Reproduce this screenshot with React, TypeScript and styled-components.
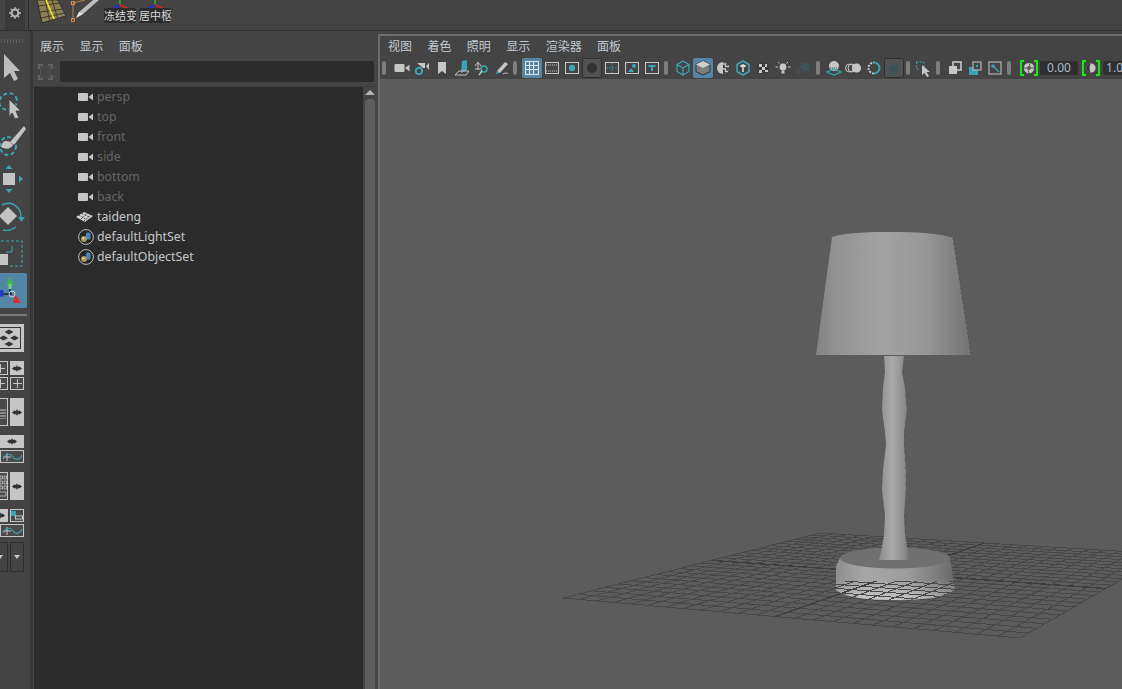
import React from "react";
import styled, { createGlobalStyle } from "styled-components";

const Global = createGlobalStyle`
  html, body { margin: 0; padding: 0; width: 1122px; height: 689px; overflow: hidden; background: #444444; }
  #root { width: 1122px; height: 689px; }
  * { box-sizing: border-box; }
`;
const FONT = `"Noto Sans CJK SC", "Noto Sans", sans-serif`;
const TEAL = "#3aa5b4";
const LIGHT = "#c6c6c6";

const Page = styled.div`
  width: 1122px; height: 689px; display: flex; flex-direction: column; background: #444444;
  font-family: ${FONT}; overflow: hidden;
`;
const Shelf = styled.div`
  height: 31px; flex: none; display: flex; background: #444444; border-bottom: 1px solid #2f2f2f;
`;
const GearBox = styled.div`
  width: 20px; height: 30px; margin-left: 5px; background: #3a3a3a; display: flex; align-items: center; justify-content: center; padding-bottom: 4px;
`;
const ShelfBody = styled.div`
  flex: 1; margin-left: 3px; border-left: 1px solid #2f2f2f; display: flex; align-items: flex-start; padding-left: 7px; overflow: hidden;
`;
const ShelfIcon = styled.svg<{ $ml?: number }>`
  display: block; flex: none; margin-left: ${(p) => p.$ml ?? 0}px;
`;
const TextTool = styled.div<{ $ml: number }>`
  position: relative; width: 33px; height: 30px; margin-left: ${(p) => p.$ml}px; flex: none; overflow: hidden;
`;
const TextToolAxes = styled.svg`
  display: block;
`;
const TextToolLabel = styled.span`
  position: absolute; left: 0; top: 8px; width: 32px; height: 15px; line-height: 15px; background: rgba(40,40,40,.85);
  border-radius: 2px; color: #d8d8d8; font-size: 11px; white-space: nowrap; overflow: hidden;
`;
const Main = styled.div`
  flex: 1; min-height: 0; display: flex;
`;
const ToolBox = styled.div`
  width: 31px; flex: none; border-right: 1px solid #333333; display: flex; flex-direction: column; overflow: hidden; padding-top: 8px;
`;
const DotHandle = styled.div`
  height: 4px; width: 25px; flex: none;
  background-image: radial-gradient(#7b7b7b 0.7px, transparent 0.8px); background-size: 3px 2px;
`;
const ToolSvg = styled.svg<{ $mt: number }>`
  display: block; flex: none; margin-top: ${(p) => p.$mt}px;
`;
const ActiveTool = styled.div`
  width: 27px; height: 35px; flex: none; margin-top: 6px; background: #5285a6; border-radius: 0 2px 2px 0;
`;
const ActiveGlyph = styled.svg`
  display: block;
`;
const ToolRule = styled.div`
  width: 27px; height: 2px; flex: none; margin-top: 6px; background: #7a7a7a;
`;
const LayoutRow = styled.div<{ $mt: number; $h: number }>`
  display: flex; justify-content: flex-end; gap: 2px; width: 24px; height: ${(p) => p.$h}px; flex: none; margin-top: ${(p) => p.$mt}px;
`;
const LayoutBtn = styled.div<{ $w: number; $tone?: "light" | "dark" }>`
  width: ${(p) => p.$w}px; height: 100%; flex: none; display: flex; align-items: center; justify-content: center;
  background: ${(p) => (p.$tone === "light" ? LIGHT : p.$tone === "dark" ? "#444444" : "#4a4a4a")};
  border: ${(p) => (p.$tone === "light" ? "none" : p.$tone === "dark" ? "1px solid #2e2e2e" : `1px solid ${LIGHT}`)};
  overflow: hidden;
`;
const Glyph = styled.svg`
  display: block; flex: none;
`;
const Divider = styled.div`
  width: 2px; flex: none; background: #393939;
`;
const Outliner = styled.div`
  width: 343px; flex: none; display: flex; flex-direction: column; min-height: 0;
`;
const MenuBar = styled.div<{ $left: number; $h: number }>`
  display: flex; height: ${(p) => p.$h}px; flex: none; align-items: center; padding-left: ${(p) => p.$left}px; gap: 15.4px;
`;
const MenuItem = styled.span`
  font-size: 12px; color: #c0c8d0; line-height: 16px; white-space: nowrap;
`;
const FilterRow = styled.div`
  height: 21px; flex: none; display: flex; align-items: center; padding-left: 5px; padding-right: 2px; gap: 7px;
`;
const FilterInput = styled.div`
  flex: 1; height: 21px; background: #2c2c2c; border-radius: 2px;
`;
const ListArea = styled.div`
  flex: 1; display: flex; min-height: 0; margin-top: 4px; border-top: 1px solid #3c3c3c;
`;
const List = styled.div`
  flex: 1; background: #2b2b2b; padding-left: 44px; margin-left: 1px;
`;
const ListRow = styled.div`
  height: 20px; display: flex; align-items: center; gap: 2px;
`;
const RowIcon = styled.svg`
  display: block; flex: none; width: 17px; height: 16px;
`;
const MeshRowIcon = styled(RowIcon)`
  width: 19px; margin-left: -2px;
`;
const RowLabel = styled.span<{ $dim?: boolean }>`
  font-family: "Noto Sans", sans-serif; font-size: 12.3px; line-height: 20px; color: ${(p) => (p.$dim ? "#666666" : "#c6c8ca")};
`;
const ScrollTrack = styled.div`
  width: 13px; flex: none; display: flex; flex-direction: column; align-items: center; padding-top: 3px;
`;
const ScrollArrow = styled.div`
  width: 0; height: 0; border-left: 5px solid transparent; border-right: 5px solid transparent; border-bottom: 5px solid #b5b5b5; flex: none;
`;
const ScrollThumb = styled.div`
  flex: 1; width: 10px; margin-top: 4px; background: #5e5e5e; border-radius: 4px 4px 0 0;
`;
const ViewPanel = styled.div`
  flex: 1; min-width: 0; display: flex; flex-direction: column; margin-top: 3px; margin-left: 2px; border-left: 2px solid #6d6d6d; border-top: 2px solid #6d6d6d;
`;
const Toolbar = styled.div`
  height: 23px; flex: none; display: flex; align-items: center; overflow: hidden; padding-left: 1px;
`;
const Sep = styled.div<{ $l: number; $r: number }>`
  width: 4px; height: 14px; background: #7e7e7e; border-radius: 2px; flex: none; margin-left: ${(p) => p.$l}px; margin-right: ${(p) => p.$r}px;
`;
const Tool = styled.div<{ $state?: "on" | "off"; $ml?: number }>`
  width: 20px; height: 20px; flex: none; display: flex; align-items: center; justify-content: center; border-radius: 2px;
  margin-left: ${(p) => p.$ml ?? 0}px;
  background: ${(p) => (p.$state === "on" ? "#5285a6" : p.$state === "off" ? "#525252" : "transparent")};
  border: ${(p) => (p.$state === "off" ? "1px solid #2e2e2e" : "none")};
`;
const NumField = styled.div<{ $w: number; $ml: number }>`
  width: ${(p) => p.$w}px; height: 14px; margin-left: ${(p) => p.$ml}px; flex: none; background: #2f2f2f; border-radius: 2px;
  color: #a9bdd0; font-family: "Noto Sans", sans-serif; font-size: 12px; line-height: 14px; text-align: center; overflow: hidden; white-space: nowrap;
`;
const Scene = styled.div`
  flex: 1; min-height: 0; background: #5c5c5c;
`;
const SceneSvg = styled.svg`
  display: block; width: 100%; height: 100%;
`;

/* small glyphs */
const I = ({ children, w = 18, h = 18 }: { children: React.ReactNode; w?: number; h?: number }) => (
  <Glyph width={w} height={h} viewBox={`0 0 ${w} ${h}`}>{children}</Glyph>
);
const Diamond = ({ s = 10 }: { s?: number }) => (
  <Glyph width={s} height={s * 0.7} viewBox="0 0 10 7"><path d="M0 3.5 2.5 1.5 4 2 5 0 6 2 7.5 1.5 10 3.5 7.5 5.5 6 5 5 7 4 5 2.5 5.5Z" fill="#333" /></Glyph>
);
const Plus = () => (
  <Glyph width="9" height="9" viewBox="0 0 9 9"><path d="M4.5 0V9M0 4.5H9" stroke={LIGHT} strokeWidth="1" /></Glyph>
);
const Wave = () => (
  <Glyph width="22" height="10" viewBox="0 0 22 10">
    <path d="M6 1V9M2 5H10" stroke={LIGHT} />
    <path d="M2 7C6 0 10 2 12 5S18 9 21 3" fill="none" stroke={TEAL} strokeWidth="1.2" />
  </Glyph>
);
const Arrowdown = () => (
  <Glyph width="6" height="4" viewBox="0 0 6 4"><path d="M0 0H6L3 4Z" fill={LIGHT} /></Glyph>
);
const Cam = ({ fill = LIGHT }: { fill?: string }) => (
  <>
    <rect x="0" y="4" width="10" height="8" rx="1" fill={fill} />
    <path d="M10.5 8 15 4.5V11.5Z" fill={fill} />
  </>
);

const SetIcon = () => (
  <RowIcon viewBox="0 0 17 16">
    <circle cx="8" cy="8" r="7.4" fill="#262626" stroke="#bcbcbc" strokeWidth="1" />
    <rect x="8" y="3.5" width="4.5" height="7" rx="1.5" fill="#4a86bb" />
    <circle cx="6" cy="10" r="3" fill="#a8985c" />
    <circle cx="5.3" cy="9.3" r="1" fill="#e5dcae" />
  </RowIcon>
);
const MeshIcon = () => (
  <MeshRowIcon viewBox="0 0 19 16">
    <path d="M0 8 8 3 17 7 9 13Z" fill="#d4d4d4" />
    <path d="M3 6 11 11M6 4.5 14 8.5M5 10 12 4M8 12 15 6" stroke="#333" strokeWidth="1" strokeDasharray="1.5 1.5" />
  </MeshRowIcon>
);

const rows = ["persp", "top", "front", "side", "bottom", "back"];

/* grid projection */
const L = [563 , 598], T = [820, 533], R = [1166, 554], B = [1020, 638];
function homography() {
  const [x0, y0] = L, [x1, y1] = B, [x2, y2] = R, [x3, y3] = T;
  const dx1 = x1 - x2, dx2 = x3 - x2, sx = x0 - x1 + x2 - x3;
  const dy1 = y1 - y2, dy2 = y3 - y2, sy = y0 - y1 + y2 - y3;
  const d = dx1 * dy2 - dx2 * dy1;
  const g = (sx * dy2 - dx2 * sy) / d, h = (dx1 * sy - sx * dy1) / d;
  const a = x1 - x0 + g * x1, b = x3 - x0 + h * x3, c = x0;
  const e = y1 - y0 + g * y1, f = y3 - y0 + h * y3, i = y0;
  return (u: number, v: number) => {
    const w = g * u + h * v + 1;
    return [(a * u + b * v + c) / w, (e * u + f * v + i) / w];
  };
}
const project = homography();
const N = 24;
const fineLines: string[] = [];
const axisLines: string[] = [];
for (let k = 0; k <= N; k++) {
  const t = k / N;
  const p = project(t, 0), q = project(t, 1), r = project(0, t), s = project(1, t);
  const d1 = `M${p[0].toFixed(1)} ${p[1].toFixed(1)}L${q[0].toFixed(1)} ${q[1].toFixed(1)}`;
  const d2 = `M${r[0].toFixed(1)} ${r[1].toFixed(1)}L${s[0].toFixed(1)} ${s[1].toFixed(1)}`;
  (k === N / 2 ? axisLines : fineLines).push(d1, d2);
}
const GridLines = () => (
  <g shapeRendering="crispEdges" fill="none">
    <path d={fineLines.join("")} stroke="#484848" strokeWidth="1" />
    <path d={axisLines.join("")} stroke="#3e3e3e" strokeWidth="1.4" />
  </g>
);

const poleLeft: [number, number][] = [[884, 356], [885, 372], [883, 388], [882, 410], [885, 432], [886, 445], [883, 470], [882, 490], [885, 515], [884, 535], [881, 552], [879, 560]];
const poleRight: [number, number][] = [[904, 356], [902, 372], [905, 388], [907, 410], [904, 432], [904, 445], [906, 470], [906, 490], [904, 515], [905, 535], [908, 552], [911, 560]];
const polePath = "M" + [...poleLeft, ...[...poleRight].reverse()].map((p) => p.join(" ")).join("L") + "Z";
const BASE = "M836 566 840 558C850 552 870 548 895 548S942 552 950 558L955 590C948 597 925 600 895 600S845 597 836 590Z";

const Lamp = () => (
  <>
    <defs>
      <linearGradient id="shade" x1="0" x2="1" y1="0" y2="0">
        <stop offset="0" stopColor="#838383" />
        <stop offset=".12" stopColor="#919191" />
        <stop offset=".42" stopColor="#a3a3a3" />
        <stop offset=".7" stopColor="#979797" />
        <stop offset=".92" stopColor="#7d7d7d" />
        <stop offset="1" stopColor="#707070" />
      </linearGradient>
      <linearGradient id="pole" x1="0" x2="1" y1="0" y2="0">
        <stop offset="0" stopColor="#8c8c8c" />
        <stop offset=".4" stopColor="#ababab" />
        <stop offset=".8" stopColor="#8b8b8b" />
        <stop offset="1" stopColor="#6b6b6b" />
      </linearGradient>
      <linearGradient id="baseH" x1="0" x2="1" y1="0" y2="0">
        <stop offset="0" stopColor="#8e8e8e" />
        <stop offset=".25" stopColor="#a6a6a6" />
        <stop offset=".6" stopColor="#9c9c9c" />
        <stop offset="1" stopColor="#686868" />
      </linearGradient>
      <linearGradient id="baseLow" x1="0" x2="0" y1="0" y2="1">
        <stop offset="0" stopColor="#ffffff" stopOpacity="0" />
        <stop offset=".6" stopColor="#ffffff" stopOpacity="0" />
        <stop offset="1" stopColor="#ffffff" stopOpacity=".4" />
      </linearGradient>
      <clipPath id="baseBody"><path d={BASE} /></clipPath>
    </defs>
    <path d={BASE} fill="url(#baseH)" />
    <path d={BASE} fill="url(#baseLow)" />
    <ellipse cx="895" cy="558" rx="55" ry="10.5" fill="#707070" />
    <g clipPath="url(#baseBody)">
      <svg x="830" y="581" width="130" height="22" viewBox="830 581 130 22">
        <GridLines />
      </svg>
    </g>
    <path d={polePath} fill="url(#pole)" />
    <path d="M832 237C850 232 870 232 893 232S940 233 953 238L971 355H816Z" fill="url(#shade)" />
    <path d="M953 238 971 355" stroke="#3f3f3f" strokeWidth=".6" strokeDasharray="2 3" />
    <path d="M904 372 907 410 904 445 906 490 905 535" fill="none" stroke="#333" strokeWidth=".6" strokeDasharray="1 7" />
  </>
);

const ToolCam = () => (
  <I><g transform="translate(1.5 1)"><Cam /></g></I>
);

export default function App() {
  return (
    <Page>
      <Global />
      <Shelf>
        <GearBox>
          <I w={12} h={12}>
            <circle cx="6" cy="6" r="3.4" fill="none" stroke="#b8b8b8" strokeWidth="2" />
            <path d="M6 0V2M6 10V12M0 6H2M10 6H12M1.8 1.8 3 3M9 9 10.2 10.2M1.8 10.2 3 9M9 3 10.2 1.8" stroke="#b8b8b8" strokeWidth="1.3" />
          </I>
        </GearBox>
        <ShelfBody>
          <ShelfIcon width="30" height="24" viewBox="0 0 30 24">
            <path d="M1 0H22L30 16 6 23Z" fill="#8c8058" stroke="#2f2f22" strokeWidth="1" />
            <path d="M3 6 24 3M4 12 27 9M5 18 29 13M9 0 14 22M16 0 22 19" stroke="#3f3a27" strokeWidth="1" />
            <path d="M10 0 18 19" stroke="#f2e623" strokeWidth="1.6" />
          </ShelfIcon>
          <ShelfIcon $ml={5} width="30" height="24" viewBox="0 0 30 24">
            <path d="M2 3H2M2 3V20M2 3 14 0" stroke="#b38651" strokeWidth="1" fill="none" />
            <rect x="0.5" y="1.5" width="3" height="3" fill="none" stroke="#d88a3e" />
            <rect x="0.5" y="18.5" width="3" height="3" fill="none" stroke="#d88a3e" />
            <path d="M5 18 8 12 22 0H28L12 14Z" fill="#bdbdbd" />
            <path d="M5 18 8 12 12 14Z" fill="#e0e0e0" />
          </ShelfIcon>
          {["冻结变换", "居中枢轴"].map((t, i) => (
            <TextTool key={t} $ml={i === 0 ? 3 : 2}>
              <TextToolAxes width="33" height="12" viewBox="0 0 33 12">
                <path d="M16 0V5" stroke="#23a123" strokeWidth="2" />
                <path d="M16 5 8 9" stroke="#2233c8" strokeWidth="2" />
                <path d="M16 5 25 9" stroke="#c92626" strokeWidth="2" />
              </TextToolAxes>
              <TextToolLabel>{t}</TextToolLabel>
            </TextTool>
          ))}
        </ShelfBody>
      </Shelf>
      <Main>
        <ToolBox>
          <DotHandle />
          <ToolSvg $mt={11} width="30" height="27" viewBox="0 55 30 27">
            <path d="M4 55 20 72H14L18 80 14 82 10 74 4 79Z" fill="#bdbdbd" />
          </ToolSvg>
          <ToolSvg $mt={8} width="30" height="30" viewBox="0 90 30 30">
            <ellipse cx="8" cy="102" rx="9" ry="8" fill="none" stroke={TEAL} strokeWidth="2" strokeDasharray="4 2.5" transform="rotate(-30 9 102)" />
            <path d="M9 100 21 112H16L19 119 15 120 12 114 9 118Z" fill="#c4c4c4" stroke="#444" />
          </ToolSvg>
          <ToolSvg $mt={7} width="30" height="32" viewBox="0 127 30 32">
            <ellipse cx="8" cy="147" rx="8" ry="9" fill="none" stroke={TEAL} strokeWidth="2" strokeDasharray="4 2.5" />
            <path d="M24 127 10 143 14 146 26 130Z" fill="#c4c4c4" />
            <path d="M1 148C2 142 6 141 10 143L13 146C10 151 5 150 1 148Z" fill="#c4c4c4" />
          </ToolSvg>
          <ToolSvg $mt={6} width="30" height="30" viewBox="0 164 30 30">
            <rect x="3" y="173" width="12" height="12" fill="#c4c4c4" />
            <path d="M9 165 12.5 169H5.5ZM9 193 12.5 189H5.5ZM23 179 19 175.5V182.5Z" fill={TEAL} />
          </ToolSvg>
          <ToolSvg $mt={8} width="30" height="30" viewBox="0 201 30 30">
            <path d="M8 206 17 215 8 224 -1 215Z" fill="#c4c4c4" />
            <path d="M2 204C12 199 21 206 21 216M16 226C12 229 8 230 3 229" fill="none" stroke={TEAL} strokeWidth="1.4" />
            <path d="M18 216H25L21.5 221Z" fill={TEAL} />
          </ToolSvg>
          <ToolSvg $mt={6} width="30" height="29" viewBox="0 238 30 29">
            <path d="M1 241H22V266H9" fill="none" stroke={TEAL} strokeDasharray="3 2" />
            <rect x="0" y="254" width="8" height="11" fill="#c4c4c4" />
            <path d="M6 252H12V246" fill="none" stroke={TEAL} />
          </ToolSvg>
          <ActiveTool>
            <ActiveGlyph width="27" height="35" viewBox="0 272 27 35">
              <path d="M10 286V293M3 293H12" stroke="#1f1f1f" strokeWidth="1.6" />
              <path d="M10 276 13.5 284H6.5Z" fill="#3dbd3d" />
              <rect x="8.5" y="283" width="3" height="5" fill="#7fd37f" />
              <rect x="0" y="289" width="3.5" height="6.5" fill="#2737c6" />
              <path d="M15 293 21 302H13Z" fill="#d83232" />
              <circle cx="12" cy="293" r="3" fill="none" stroke="#d5e5e8" strokeWidth=".9" />
            </ActiveGlyph>
          </ActiveTool>
          <ToolRule />
          <LayoutRow $mt={8} $h={28}>
            <LayoutBtn $w={24} $tone="light">
              <Glyph width="24" height="28" viewBox="0 0 24 28">
                <rect x="-1" y="3.5" width="21.5" height="21" fill="none" stroke="#333" />
                <path d="M4.5 8 9 5.5 13.5 8 9 10.5ZM4.5 20 9 17.5 13.5 20 9 22.5ZM-1 14 3.5 11.5 8 14 3.5 16.5ZM10 14 14.5 11.5 19 14 14.5 16.5Z" fill="#333" />
              </Glyph>
            </LayoutBtn>
          </LayoutRow>
          <LayoutRow $mt={9} $h={14}>
            <LayoutBtn $w={16}><Plus /></LayoutBtn>
            <LayoutBtn $w={14} $tone="light"><Diamond /></LayoutBtn>
          </LayoutRow>
          <LayoutRow $mt={2} $h={13}>
            <LayoutBtn $w={16}><Plus /></LayoutBtn>
            <LayoutBtn $w={14}><Plus /></LayoutBtn>
          </LayoutRow>
          <LayoutRow $mt={8} $h={28}>
            <LayoutBtn $w={16}>
              <Glyph width="12" height="14" viewBox="0 0 12 14"><path d="M6 5H12M6 8H12M6 11H12M6 14H12" stroke={LIGHT} /></Glyph>
            </LayoutBtn>
            <LayoutBtn $w={14} $tone="light"><Diamond /></LayoutBtn>
          </LayoutRow>
          <LayoutRow $mt={9} $h={13}>
            <LayoutBtn $w={24} $tone="light"><Diamond /></LayoutBtn>
          </LayoutRow>
          <LayoutRow $mt={2} $h={13}>
            <LayoutBtn $w={24}><Wave /></LayoutBtn>
          </LayoutRow>
          <LayoutRow $mt={9} $h={28}>
            <LayoutBtn $w={16}>
              <Glyph width="14" height="24" viewBox="0 0 14 24"><path d="M7 2H9.5V5H7ZM11 2H13.5V5H11ZM7 7H9.5V10H7ZM11 7H13.5V10H11ZM7 12H9.5V15H7ZM11 12H13.5V15H11ZM6 18H13V22H6Z" fill="none" stroke={LIGHT} strokeWidth=".8" /></Glyph>
            </LayoutBtn>
            <LayoutBtn $w={14} $tone="light"><Diamond /></LayoutBtn>
          </LayoutRow>
          <LayoutRow $mt={9} $h={13}>
            <LayoutBtn $w={16} $tone="light"><Diamond /></LayoutBtn>
            <LayoutBtn $w={14}>
              <Glyph width="12" height="9" viewBox="0 0 12 9"><rect width="5" height="5" fill={TEAL} /><rect x="4.5" y="5" width="7" height="3" fill="none" stroke={LIGHT} /></Glyph>
            </LayoutBtn>
          </LayoutRow>
          <LayoutRow $mt={2} $h={13}>
            <LayoutBtn $w={24}><Wave /></LayoutBtn>
          </LayoutRow>
          <LayoutRow $mt={5} $h={30}>
            <LayoutBtn $w={16} $tone="dark"><Arrowdown /></LayoutBtn>
            <LayoutBtn $w={14} $tone="dark"><Arrowdown /></LayoutBtn>
          </LayoutRow>
        </ToolBox>
        <Divider />
        <Outliner>
          <MenuBar $left={7} $h={30}>
            <MenuItem>展示</MenuItem>
            <MenuItem>显示</MenuItem>
            <MenuItem>面板</MenuItem>
          </MenuBar>
          <FilterRow>
            <Glyph width="15" height="16" viewBox="0 0 15 16">
              <path d="M1 5V1H5M10 1H14V5M14 11V15H10M5 15H1V11" fill="none" stroke="#626262" strokeWidth="2" />
              <path d="M3 3H12V13H3Z" fill="none" stroke="#555" />
            </Glyph>
            <FilterInput />
          </FilterRow>
          <ListArea>
            <List>
              {rows.map((r) => (
                <ListRow key={r}>
                  <RowIcon viewBox="0 0 17 16"><Cam /></RowIcon>
                  <RowLabel $dim>{r}</RowLabel>
                </ListRow>
              ))}
              <ListRow><MeshIcon /><RowLabel>taideng</RowLabel></ListRow>
              <ListRow><SetIcon /><RowLabel>defaultLightSet</RowLabel></ListRow>
              <ListRow><SetIcon /><RowLabel>defaultObjectSet</RowLabel></ListRow>
            </List>
            <ScrollTrack>
              <ScrollArrow />
              <ScrollThumb />
            </ScrollTrack>
          </ListArea>
        </Outliner>
        <ViewPanel>
          <MenuBar $left={8} $h={20}>
            {["视图", "着色", "照明", "显示", "渲染器", "面板"].map((m) => <MenuItem key={m}>{m}</MenuItem>)}
          </MenuBar>
          <Toolbar>
            <Sep $l={1} $r={6} />
            <Tool><ToolCam /></Tool>
            <Tool><I><circle cx="6" cy="12" r="3.2" fill="none" stroke={TEAL} strokeWidth="2" /><path d="M4 4H12V9H10Z" fill={LIGHT} /><path d="M13 7 16 4V11Z" fill={LIGHT} /></I></Tool>
            <Tool><I><path d="M5 3H13V15L9 12 5 15Z" fill={LIGHT} /></I></Tool>
            <Tool><I><path d="M9 2 14 1V11L8 14Z" fill={TEAL} /><path d="M2 16 6 12H16L13 16Z" fill="none" stroke={LIGHT} /></I></Tool>
            <Tool><I><path d="M5 4V11M2 7 5 3 8 7M2 10H9" stroke={LIGHT} fill="none" /><circle cx="11" cy="10" r="3" fill="none" stroke={TEAL} strokeWidth="1.6" /><path d="M9 12 6 16" stroke={LIGHT} strokeWidth="1.4" /></I></Tool>
            <Tool><I><path d="M4 12 12 3 15 5 7 14Z" fill={LIGHT} /><path d="M3 15 4 12 7 14Z" fill={TEAL} /><path d="M10 15C12 13 13 15 15 14" stroke={LIGHT} fill="none" /></I></Tool>
            <Sep $l={1} $r={5} />
            <Tool $state="on"><I><rect x="2.5" y="2.5" width="13" height="13" fill="none" stroke="#e2e2e2" /><path d="M6.5 3V15M10.5 3V15M3 6.5H15M3 10.5H15" stroke="#e2e2e2" /></I></Tool>
            <Tool><I><rect x="2.5" y="3.5" width="13" height="11" fill="none" stroke={LIGHT} /><path d="M3 6H15M3 12H15" stroke={LIGHT} strokeDasharray="1 1" /></I></Tool>
            <Tool><I><rect x="2.5" y="3.5" width="13" height="11" fill="none" stroke={LIGHT} /><circle cx="9" cy="9" r="3.2" fill={TEAL} /></I></Tool>
            <Tool $state="off"><I><circle cx="9" cy="9" r="5" fill="#333" /></I></Tool>
            <Tool><I><rect x="2.5" y="3.5" width="13" height="11" fill="none" stroke={LIGHT} /><path d="M9 4V14M3 9H15" stroke={TEAL} strokeDasharray="1.5 1.5" /></I></Tool>
            <Tool><I><rect x="2.5" y="3.5" width="13" height="11" fill="none" stroke={LIGHT} /><circle cx="11" cy="7" r="2" fill={TEAL} /><path d="M5 13 8 9 11 13Z" fill={TEAL} /></I></Tool>
            <Tool><I><rect x="2.5" y="3.5" width="13" height="11" fill="none" stroke={LIGHT} /><path d="M5.5 6H12.5V8H10V12H8V8H5.5Z" fill={TEAL} /></I></Tool>
            <Sep $l={2} $r={5} />
            <Tool><I><path d="M9 2 15 5.5V12.5L9 16 3 12.5V5.5ZM3 5.5 9 9 15 5.5M9 9V16" fill="none" stroke={TEAL} strokeWidth="1.2" /></I></Tool>
            <Tool $state="on"><I><path d="M9 2 16 5.5V12.5L9 16 2 12.5V5.5Z" fill="#7c7c7c" stroke="#333" /><path d="M2 5.5 9 2 16 5.5 9 9Z" fill="#cfcfcf" /></I></Tool>
            <Tool><I><circle cx="9" cy="9" r="6" fill={LIGHT} /><path d="M9 3A6 6 0 0 1 9 15Z" fill="#3a3a3a" /><path d="M9 5H11.5V7.5H15M9 10H11.5V12.5H14" stroke={LIGHT} strokeWidth="1.4" fill="none" /></I></Tool>
            <Tool><I><path d="M9 2 15 5.5V12.5L9 16 3 12.5V5.5Z" fill="none" stroke={TEAL} strokeWidth="1.6" /><path d="M5.5 7 9 5 12.5 7 9 9Z" fill="#ddd" /><path d="M9 9V13" stroke="#bbb" strokeWidth="2" /></I></Tool>
            <Tool><I><circle cx="9" cy="9" r="6" fill="#3a3a3a" /><path d="M5 5H8V8H5ZM11 5H13V8H11ZM8 8H11V11H8ZM5 11H8V14H5ZM11 11H14V13H11Z" fill={LIGHT} /></I></Tool>
            <Tool><I><circle cx="9" cy="8" r="3.4" fill={LIGHT} /><rect x="7.5" y="11.5" width="3" height="3" fill={LIGHT} /><path d="M1.5 8H4M14 8H16.5M4 3 5.5 4.5M14 3 12.5 4.5" stroke={LIGHT} /></I></Tool>
            <Tool><I><circle cx="11" cy="8" r="4.5" fill="#3f5259" /><path d="M2 13 6 10M4 15 8 12" stroke="#505050" strokeWidth="1.4" /></I></Tool>
            <Sep $l={3} $r={4} />
            <Tool><I><circle cx="9" cy="7" r="5" fill={LIGHT} /><path d="M3 9H15" stroke="#444" strokeDasharray="1 1" /><path d="M2 13 9 10 16 13 9 16Z" fill="none" stroke={TEAL} strokeWidth="1.2" /></I></Tool>
            <Tool><I><circle cx="4.5" cy="9" r="4" fill="none" stroke={LIGHT} /><circle cx="7" cy="9" r="4" fill="none" stroke={LIGHT} /><circle cx="11.5" cy="9" r="4.6" fill={LIGHT} /></I></Tool>
            <Tool><I><path d="M9 3.5A5.5 5.5 0 0 1 9 14.5" fill="none" stroke={TEAL} strokeWidth="2" /><path d="M9 14.5A5.5 5.5 0 0 1 9 3.5" fill="none" stroke={LIGHT} strokeWidth="2" strokeDasharray="2 1.2" /></I></Tool>
            <Tool $state="off"><I w={14} h={14}><rect x="2" y="4" width="9" height="9" fill="#3f5259" /></I></Tool>
            <Sep $l={2} $r={4} />
            <Tool><I><path d="M1.5 3H9V9" fill="none" stroke={TEAL} strokeDasharray="2 1.5" /><path d="M1.5 3V10H5" fill="none" stroke={TEAL} strokeDasharray="2 1.5" /><path d="M7 6 15 13H11.5L14 17 12 18 9.5 14 7 16Z" fill={LIGHT} /></I></Tool>
            <Sep $l={2} $r={5} />
            <Tool><I><rect x="7" y="3" width="8" height="8" fill="none" stroke={LIGHT} strokeWidth="1.6" /><rect x="3" y="7" width="8" height="8" fill={LIGHT} /></I></Tool>
            <Tool><I><rect x="3" y="8" width="9" height="8" fill={TEAL} /><rect x="7" y="3" width="8" height="8" fill="#444" stroke={LIGHT} /><rect x="10" y="6" width="2" height="2" fill={TEAL} /></I></Tool>
            <Tool><I><rect x="3" y="3" width="12" height="12" fill="none" stroke={LIGHT} /><circle cx="7" cy="7" r="1.8" fill={TEAL} /><path d="M8 8 13 13" stroke={TEAL} strokeWidth="1.4" /></I></Tool>
            <Sep $l={2} $r={8} />
            <Tool><I w={20} h={18}>
              <path d="M5 2H2V16H5M15 2H18V16H15" fill="none" stroke="#17e617" strokeWidth="2" />
              <circle cx="10" cy="9" r="5.2" fill={LIGHT} /><circle cx="10" cy="9" r="2" fill="#555" />
              <path d="M10 4 11 7M15 9H12M10 14 9 11M5 9H8" stroke="#555" />
            </I></Tool>
            <NumField $w={38} $ml={1}>0.00</NumField>
            <Tool $ml={3}><I w={20} h={18}>
              <path d="M5 2H2V16H5M15 2H18V16H15" fill="none" stroke="#17e617" strokeWidth="2" />
              <circle cx="10" cy="9" r="4.6" fill={LIGHT} /><path d="M10 4.4A4.6 4.6 0 0 0 10 13.6C8 12 8 6 10 4.4Z" fill="#333" />
            </I></Tool>
            <NumField $w={30} $ml={2}>1.00</NumField>
          </Toolbar>
          <Scene>
            <SceneSvg viewBox="380 79 742 610" preserveAspectRatio="xMinYMin slice">
              <GridLines />
              <Lamp />
            </SceneSvg>
          </Scene>
        </ViewPanel>
      </Main>
    </Page>
  );
}
